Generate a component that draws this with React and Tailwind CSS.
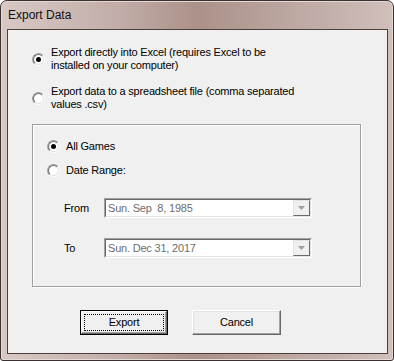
import React from 'react';

function Radio({ checked }) {
  return (
    <span className="shrink-0 w-[13px] h-[13px] rounded-full border border-t-[#a0a0a0] border-l-[#a0a0a0] border-b-white border-r-white">
      <span className="flex items-center justify-center w-full h-full rounded-full border border-t-[#696969] border-l-[#696969] border-b-[#e3e3e3] border-r-[#e3e3e3] bg-white">
        {checked && <span className="w-[5px] h-[5px] rounded-full bg-black" />}
      </span>
    </span>
  );
}

function Combo({ value }) {
  return (
    <div className="w-[208px] h-[20px] border border-t-[#a0a0a0] border-l-[#a0a0a0] border-b-white border-r-white">
      <div className="flex h-full border border-t-[#696969] border-l-[#696969] border-b-[#e3e3e3] border-r-[#e3e3e3] bg-white">
        <span className="flex-1 pl-[2px] leading-[16px] text-[#6d6d6d] whitespace-pre">{value}</span>
        <span className="w-[17px] h-full border border-t-[#e3e3e3] border-l-[#e3e3e3] border-b-[#696969] border-r-[#696969] bg-[#f0f0f0] flex items-center justify-center">
          <svg width="7" height="4" viewBox="0 0 7 4">
            <polygon points="0,0 7,0 3.5,4" fill="#a0a0a0" />
          </svg>
        </span>
      </div>
    </div>
  );
}

export default function App() {
  return (
    <div className="w-[394px] h-[361px] bg-white font-['Liberation_Sans',Arial,sans-serif] text-[11px] tracking-[-0.2px] text-black select-none">
      <div className="w-full h-full flex flex-col rounded-t-[7px] rounded-b-[3px] border border-[#3b3030] bg-[linear-gradient(90deg,#d8c9c5_0%,#c2ada8_30%,#ab918a_50%,#b9a39d_70%,#d0bfbb_100%)] shadow-[inset_0_0_0_1px_#e6dad7]">
        {/* Title bar */}
        <div className="h-[28px] pl-[7px] flex items-center text-[12px] tracking-normal text-[#111]">
          Export Data
        </div>

        {/* Client area */}
        <div className="ml-[6px] w-[381px] h-[325px] border border-[#4c3f3c] bg-[#f0f0f0] flex flex-col">
          <div className="pt-[16px] pl-[24px] flex items-center gap-[6px]">
            <Radio checked />
            <span className="leading-[13px]">
              Export directly into Excel (requires Excel to be<br />installed on your computer)
            </span>
          </div>
          <div className="mt-[13px] pl-[24px] flex items-center gap-[6px]">
            <Radio />
            <span className="leading-[13px]">
              Export data to a spreadsheet file (comma separated<br />values .csv)
            </span>
          </div>

          {/* Group box */}
          <div className="mt-[13px] ml-[24px] w-[329px] h-[163px] border border-[#a0a0a0] shadow-[inset_1px_1px_0_#fff,1px_1px_0_#fff] flex flex-col">
            <div className="mt-[15px] pl-[14px] flex items-center gap-[6px] h-[13px]">
              <Radio checked />
              <span>All Games</span>
            </div>
            <div className="mt-[11px] pl-[14px] flex items-center gap-[6px] h-[13px]">
              <Radio />
              <span>Date Range:</span>
            </div>
            <div className="mt-[21px] pl-[31px] flex items-center">
              <span className="w-[40px]">From</span>
              <Combo value="Sun. Sep  8, 1985" />
            </div>
            <div className="mt-[20px] pl-[31px] flex items-center">
              <span className="w-[40px]">To</span>
              <Combo value="Sun. Dec 31, 2017" />
            </div>
          </div>

          {/* Buttons */}
          <div className="mt-[23px] pl-[72px] flex gap-[24px]">
            <button className="w-[88px] h-[25px] border border-black bg-[#f0f0f0]">
              <span className="flex w-full h-full border border-t-white border-l-white border-b-[#696969] border-r-[#696969] shadow-[inset_-1px_-1px_0_#a0a0a0] p-[2px]">
                <span className="flex-1 flex items-center justify-center border border-dotted border-black">
                  Export
                </span>
              </span>
            </button>
            <button className="w-[89px] h-[25px] border border-t-white border-l-white border-b-[#696969] border-r-[#696969] bg-[#f0f0f0] shadow-[inset_-1px_-1px_0_#a0a0a0,inset_1px_1px_0_#e3e3e3] flex items-center justify-center">
              Cancel
            </button>
          </div>
        </div>
      </div>
    </div>
  );
}
